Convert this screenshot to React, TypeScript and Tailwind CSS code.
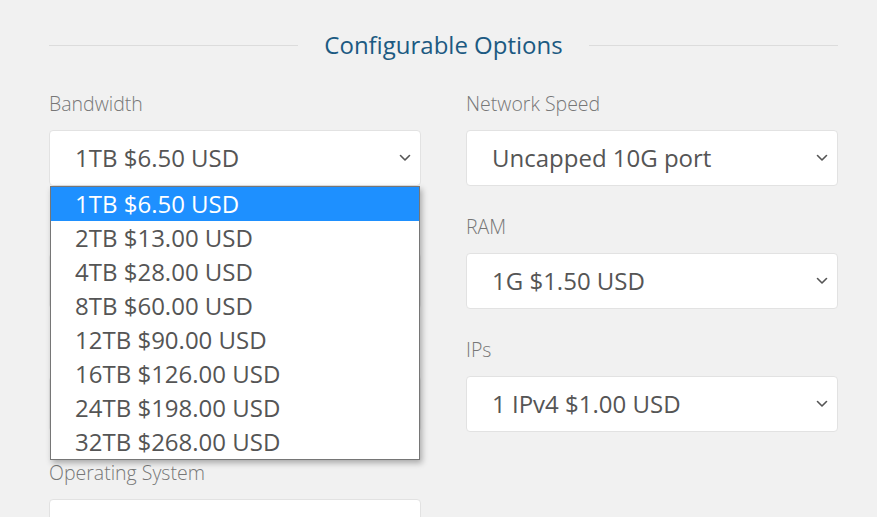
const FONT = { fontFamily: '"Open Sans", "Liberation Sans", sans-serif' }

const BANDWIDTH = [
  '1TB $6.50 USD',
  '2TB $13.00 USD',
  '4TB $28.00 USD',
  '8TB $60.00 USD',
  '12TB $90.00 USD',
  '16TB $126.00 USD',
  '24TB $198.00 USD',
  '32TB $268.00 USD',
]

function Chevron() {
  return (
    <svg width="12" height="8" viewBox="0 0 12 8" className="shrink-0">
      <path d="M1.5 1.5 L6 6 L10.5 1.5" fill="none" stroke="#555" strokeWidth="1.6" strokeLinecap="round" strokeLinejoin="round" />
    </svg>
  )
}

function Field({ label, value, children }: { label: string; value: string; children?: React.ReactNode }) {
  return (
    <div className="mb-[28px]">
      <div className="h-[26px] text-[19.5px] leading-[26px] font-light text-[#777]">{label}</div>
      <div className="relative mt-[13px]">
        <div className="flex h-[56px] items-center justify-between rounded-[4px] border border-[#e2e2e2] bg-white pl-[25px] pr-[9px]">
          <span className="text-[24px] text-[#555]">{value}</span>
          <Chevron />
        </div>
        {children}
      </div>
    </div>
  )
}

export default function App() {
  return (
    <div style={FONT} className="h-[517px] w-[877px] overflow-hidden bg-[#f1f1f1] pl-[49px] pr-[39px] pt-[30px]">
      {/* section heading with rules either side */}
      <div className="flex h-[30px] items-center gap-[26px]">
        <div className="h-px flex-1 bg-[#dcdcdc]" />
        <h2 className="text-[24px] leading-[30px] text-[#1c5a82]">Configurable Options</h2>
        <div className="h-px flex-1 bg-[#dcdcdc]" />
      </div>

      <div className="mt-[31px] grid grid-cols-2 gap-x-[45px]">
        <div>
          <Field label="Bandwidth" value="1TB $6.50 USD">
            {/* open native list */}
            <ul className="absolute left-px top-full z-10 w-[370px] border border-[#767676] bg-white shadow-[2px_3px_6px_rgba(0,0,0,0.3)]">
              {BANDWIDTH.map((o, i) => (
                <li
                  key={o}
                  className={`h-[34px] pl-[24px] text-[24px] leading-[34px] ${i === 0 ? 'bg-[#1e90ff] text-white' : 'text-[#555]'}`}
                >
                  {o}
                </li>
              ))}
            </ul>
          </Field>
          {/* fields hidden beneath the open list */}
          <Field label="" value="" />
          <Field label="" value="" />
          <Field label="Operating System" value="" />
        </div>
        <div>
          <Field label="Network Speed" value="Uncapped 10G port" />
          <Field label="RAM" value="1G $1.50 USD" />
          <Field label="IPs" value="1 IPv4 $1.00 USD" />
        </div>
      </div>
    </div>
  )
}
